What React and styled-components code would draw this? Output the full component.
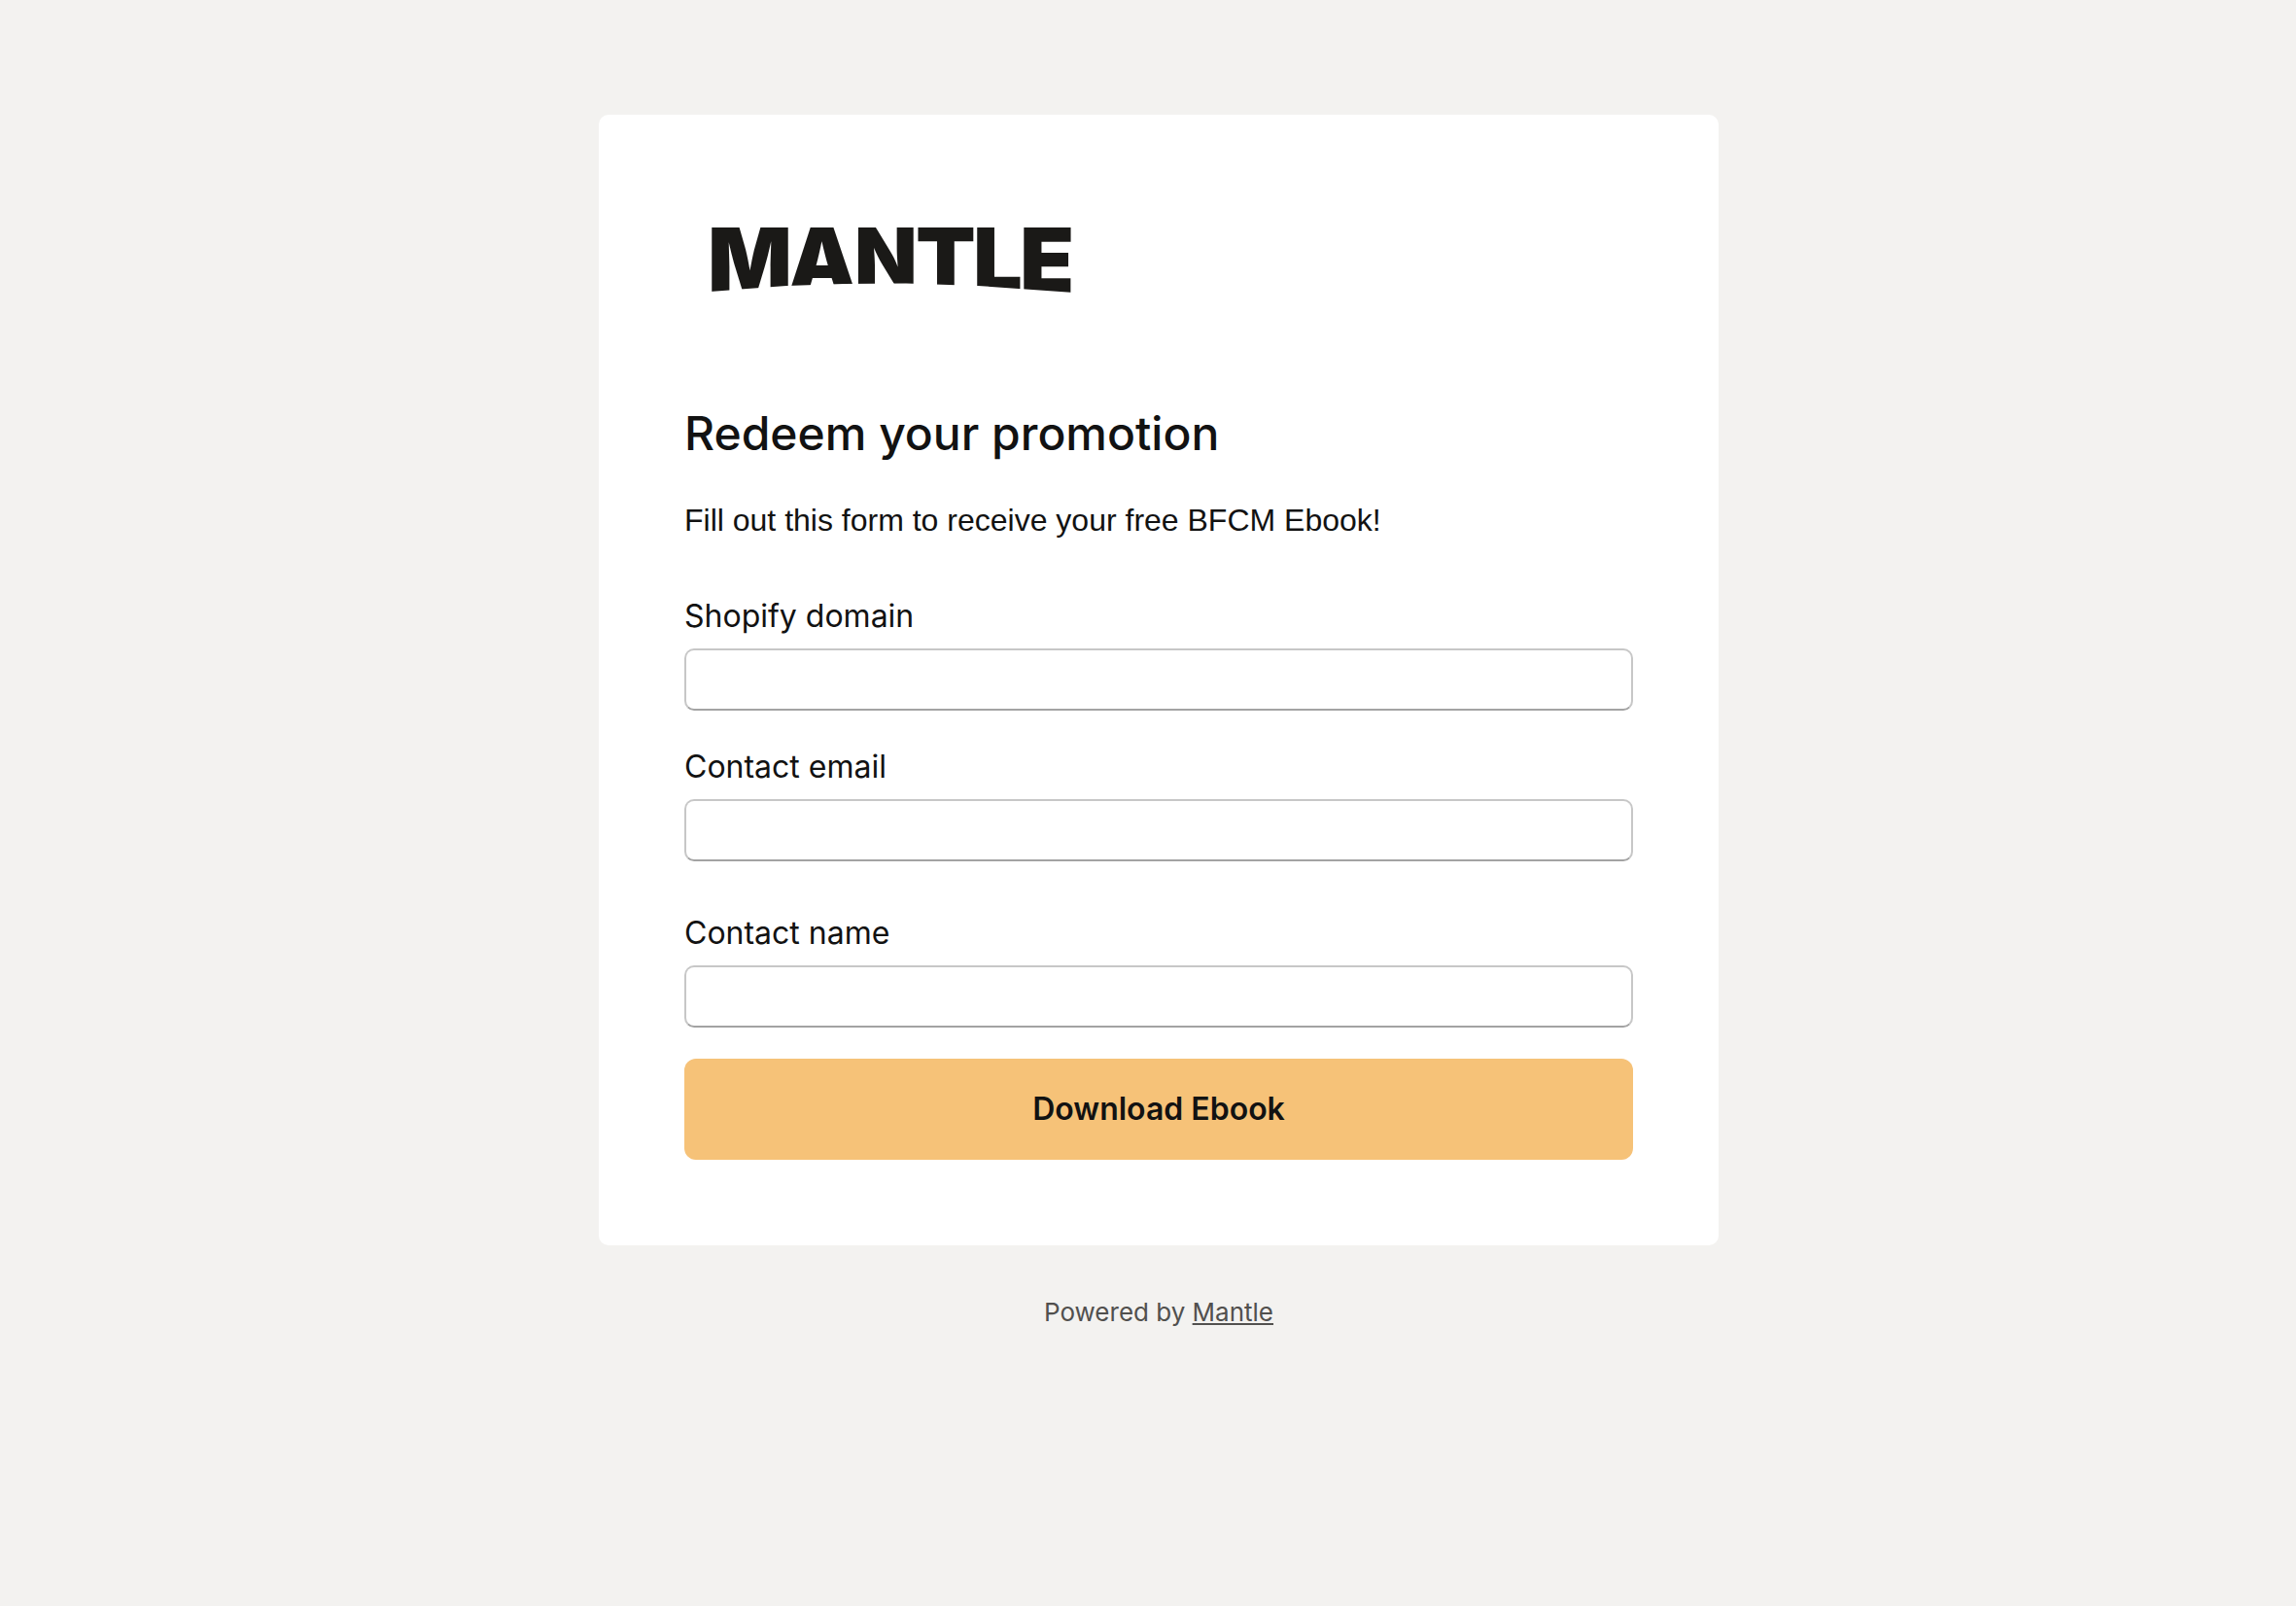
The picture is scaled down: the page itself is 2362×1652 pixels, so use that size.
import { useState } from "react";
import styled, { createGlobalStyle } from "styled-components";

const GlobalStyle = createGlobalStyle`
  *,
  *::before,
  *::after {
    box-sizing: border-box;
    margin: 0;
    padding: 0;
  }

  body {
    background-color: #f3f2f0;
    color: #121212;
    font-family: Inter, sans-serif;
    font-size: 32px;
    line-height: 40px;
  }
`;

const Page = styled.main`
  display: flex;
  flex-direction: column;
  align-items: center;
  gap: 49px;
  min-height: 100vh;
  padding: 118px 0 64px 22px;
`;

const Card = styled.section`
  width: 100%;
  max-width: 1152px;
  padding: 88px;
  border-radius: 10px;
  background-color: #fff;
`;

const LogoWrap = styled.div`
  display: flex;
  padding: 28px;
  margin-bottom: 85px;
`;

const LogoSvg = styled.svg`
  display: block;
  width: 371px;
  height: 67px;
  overflow: visible;
  fill: #1a1917;
  font-family: Inter, sans-serif;
  font-weight: 900;
`;

const Title = styled.h1`
  margin-bottom: 33px;
  font-size: 48px;
  font-weight: 450;
  line-height: 64px;
`;

const Intro = styled.p`
  margin-bottom: 55px;
  font-family: "Liberation Sans", Arial, sans-serif;
  line-height: 48px;
`;

const Form = styled.form`
  display: flex;
  flex-direction: column;
  gap: 32px;
`;

const Fields = styled.div`
  display: flex;
  flex-direction: column;
  gap: 54px;
`;

const FieldGroup = styled.div`
  display: flex;
  flex-direction: column;
  gap: 38px;
`;

const Field = styled.div`
  display: flex;
  flex-direction: column;
  gap: 13px;
`;

const Input = styled.input`
  width: 100%;
  height: 64px;
  padding: 0 22px;
  border: 2px solid #c7c7c7;
  border-bottom-color: #a3a3a3;
  border-radius: 10px;
  background-color: #fff;
  color: inherit;
  font: inherit;
`;

const SubmitButton = styled.button`
  width: 100%;
  padding: 32px;
  border: none;
  border-radius: 12px;
  background-color: #f6c278;
  color: inherit;
  font: inherit;
  font-weight: 600;
  cursor: pointer;
`;

const Footer = styled.footer`
  color: #51504e;
  font-size: 26px;
`;

const FooterLink = styled.a`
  color: inherit;
  text-decoration: underline;
  text-decoration-thickness: 2px;
  text-underline-offset: 2px;
`;

// letters share a flat top, the bottoms follow an arch
const logoLetters = [
  { char: "M", x: -4, size: 91 },
  { char: "A", x: 79, size: 88 },
  { char: "N", x: 147, size: 84 },
  { char: "T", x: 210, size: 90 },
  { char: "L", x: 269, size: 90 },
  { char: "E", x: 317, size: 92 },
];

function Logo() {
  return (
    <LogoSvg viewBox="0 0 371 67" role="img" aria-label="Mantle">
      {logoLetters.map(({ char, x, size }) => (
        <text key={char} x={x} y={Math.round(size * 0.727)} fontSize={size}>
          {char}
        </text>
      ))}
      <path
        fill="#fff"
        d="M-2 66L77 60L136 58L200 57.5L274 60L373 67V72H-2Z"
      />
    </LogoSvg>
  );
}

function TextField({ id, label, type = "text", value, onChange }) {
  return (
    <Field>
      <label htmlFor={id}>{label}</label>
      <Input id={id} name={id} type={type} value={value} onChange={onChange} />
    </Field>
  );
}

export default function App() {
  const [values, setValues] = useState({ domain: "", email: "", name: "" });

  const handleChange = function (e) {
    setValues({ ...values, [e.target.name]: e.target.value });
  };

  return (
    <>
      <GlobalStyle />
      <Page>
        <Card>
          <LogoWrap>
            <Logo />
          </LogoWrap>
          <Title>Redeem your promotion</Title>
          <Intro>Fill out this form to receive your free BFCM Ebook!</Intro>
          <Form onSubmit={(e) => e.preventDefault()}>
            <Fields>
              <FieldGroup>
                <TextField
                  id="domain"
                  label="Shopify domain"
                  value={values.domain}
                  onChange={handleChange}
                />
                <TextField
                  id="email"
                  label="Contact email"
                  type="email"
                  value={values.email}
                  onChange={handleChange}
                />
              </FieldGroup>
              <TextField
                id="name"
                label="Contact name"
                value={values.name}
                onChange={handleChange}
              />
            </Fields>
            <SubmitButton type="submit">Download Ebook</SubmitButton>
          </Form>
        </Card>
        <Footer>
          Powered by <FooterLink href="#mantle">Mantle</FooterLink>
        </Footer>
      </Page>
    </>
  );
}
